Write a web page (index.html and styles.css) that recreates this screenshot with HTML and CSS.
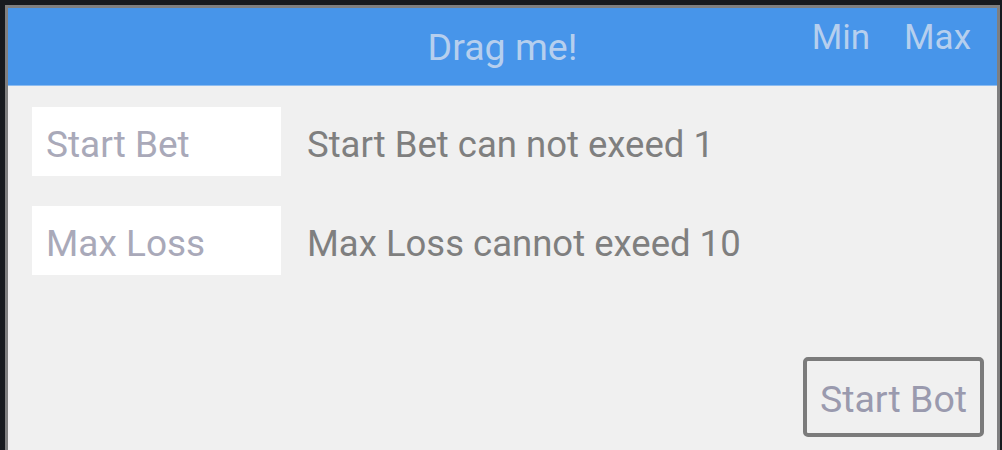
FILE: index.html
```html
<!DOCTYPE html>
<html>
<head>
<meta charset="utf-8">
<link rel="stylesheet" href="styles.css">
</head>
<body>
<div class="window">
  <div class="titlebar">
    <div class="spacer"></div>
    <div class="title">Drag me!</div>
    <div class="controls"><span class="ctl">Min</span><span class="ctl">Max</span></div>
  </div>
  <div class="content">
    <div class="row">
      <input class="field" type="text" placeholder="Start Bet">
      <span class="hint">Start Bet can not exeed 1</span>
    </div>
    <div class="row">
      <input class="field" type="text" placeholder="Max Loss">
      <span class="hint">Max Loss cannot exeed 10</span>
    </div>
    <div class="footer">
      <button class="start">Start Bot</button>
    </div>
  </div>
</div>
</body>
</html>
```

FILE: styles.css
```css
html, body {
  margin: 0;
  height: 100%;
  overflow: hidden;
}
body {
  background: #171a1f;
  padding: 5px 2px 0 5px;
  box-sizing: border-box;
  font-family: Roboto, "Liberation Sans", sans-serif;
}
.window {
  border: 3px solid #7f7f80;
  border-bottom: none;
  background: #f0f0f0;
  height: 600px;
}
.titlebar {
  height: 77px;
  background: #4795ea;
  border-bottom: 1px solid #8dbcf0;
  display: grid;
  grid-template-columns: 1fr auto 1fr;
  align-items: start;
  color: #b6cfee;
}
.title {
  font-size: 37.5px;
  padding-top: 17px;
  line-height: 44px;
}
.controls {
  display: flex;
  justify-content: flex-end;
  gap: 34px;
  padding-right: 26px;
  padding-top: 8px;
  font-size: 35px;
  line-height: 44px;
}
.content {
  padding: 21px 13px 0 24px;
  display: flex;
  flex-direction: column;
  gap: 30px;
}
.row {
  display: flex;
  align-items: center;
  gap: 26px;
}
.field {
  width: 249px;
  height: 69px;
  box-sizing: border-box;
  border: none;
  background: #ffffff;
  padding: 6px 14px 0;
  font-family: inherit;
  font-size: 37px;
  color: #444;
  outline: none;
}
.field::placeholder {
  color: #a9a9b9;
}
.hint {
  font-size: 36.5px;
  color: #7f7f7f;
  padding-top: 6px;
}
.footer {
  display: flex;
  justify-content: flex-end;
  margin-top: 52px;
}
.start {
  width: 181px;
  height: 80px;
  box-sizing: border-box;
  border: 4px solid #7b7b7b;
  border-radius: 5px;
  background: transparent;
  font-family: inherit;
  font-size: 37.5px;
  color: #9a9aae;
  padding: 4px 0 0;
}
```
